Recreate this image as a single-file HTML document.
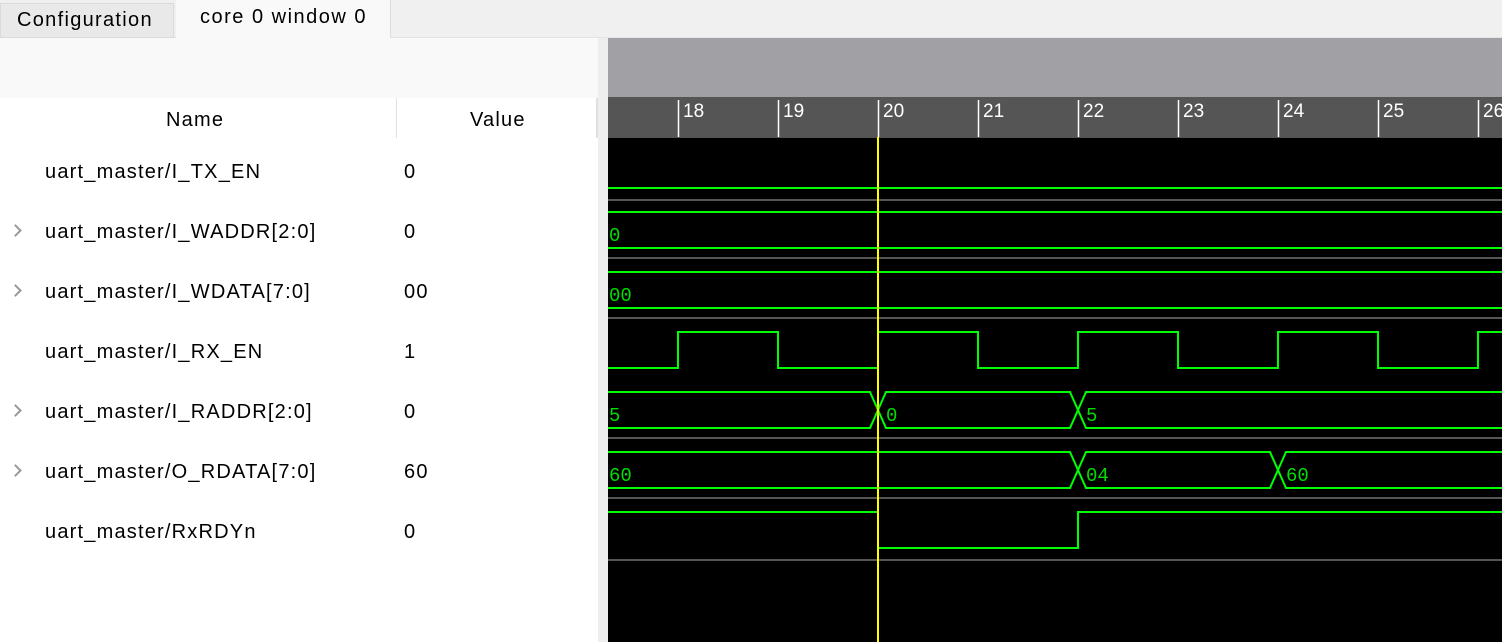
<!DOCTYPE html>
<html><head><style>
body{margin:0;width:1502px;height:642px;overflow:hidden;background:#fff;font-family:"Liberation Sans",sans-serif;position:relative}
.a{position:absolute}
.t{font-size:20px;color:#000;white-space:nowrap;letter-spacing:1.2px}
.c{position:absolute;left:11px;width:7px;height:7px;border-right:2px solid #999;border-top:2px solid #999;transform:rotate(45deg)}
</style></head><body>
<div class="a" style="left:0;top:0;width:1502px;height:37px;background:#f0f0f0;border-bottom:1px solid #e3e3e3"></div>
<div class="a" style="left:0;top:3px;width:172px;height:33px;background:#e9e9e9;border:1px solid #dadada"></div>
<div class="a t" style="left:17px;top:9px;letter-spacing:1.3px">Configuration</div>
<div class="a" style="left:176px;top:0;width:214px;height:38px;background:#f9f9f9;border-right:1px solid #ddd"></div>
<div class="a t" style="left:200px;top:6px;letter-spacing:1.5px">core 0 window 0</div>
<div class="a" style="left:0;top:38px;width:598px;height:60px;background:#f9f9f9"></div>
<div class="a" style="left:598px;top:38px;width:10px;height:604px;background:#eeeeee"></div>
<div class="a" style="left:396px;top:98px;width:1px;height:40px;background:#e0e0e0"></div>
<div class="a" style="left:596px;top:98px;width:2px;height:40px;background:#e0e0e0"></div>
<div class="a t" style="left:166px;top:109px">Name</div>
<div class="a t" style="left:470px;top:109px">Value</div>

<div class="a t" style="left:45px;top:161px">uart_master/I_TX_EN</div><div class="a t" style="left:404px;top:161px">0</div>
<div class="c" style="top:226px"></div>
<div class="a t" style="left:45px;top:221px">uart_master/I_WADDR[2:0]</div><div class="a t" style="left:404px;top:221px">0</div>
<div class="c" style="top:286px"></div>
<div class="a t" style="left:45px;top:281px">uart_master/I_WDATA[7:0]</div><div class="a t" style="left:404px;top:281px">00</div>
<div class="a t" style="left:45px;top:341px">uart_master/I_RX_EN</div><div class="a t" style="left:404px;top:341px">1</div>
<div class="c" style="top:406px"></div>
<div class="a t" style="left:45px;top:401px">uart_master/I_RADDR[2:0]</div><div class="a t" style="left:404px;top:401px">0</div>
<div class="c" style="top:466px"></div>
<div class="a t" style="left:45px;top:461px">uart_master/O_RDATA[7:0]</div><div class="a t" style="left:404px;top:461px">60</div>
<div class="a t" style="left:45px;top:521px">uart_master/RxRDYn</div><div class="a t" style="left:404px;top:521px">0</div>

<svg class="a" style="left:608px;top:38px" width="894" height="604" viewBox="608 38 894 604">
<rect x="608" y="38" width="894" height="59" fill="#a1a0a5"/>
<rect x="608" y="97" width="894" height="41" fill="#555"/>
<rect x="608" y="138" width="894" height="504" fill="#000"/>
<g stroke="#fff" stroke-width="1.5">
<line x1="678.5" y1="100" x2="678.5" y2="137"/><line x1="778.5" y1="100" x2="778.5" y2="137"/><line x1="878.5" y1="100" x2="878.5" y2="137"/><line x1="978.5" y1="100" x2="978.5" y2="137"/><line x1="1078.5" y1="100" x2="1078.5" y2="137"/><line x1="1178.5" y1="100" x2="1178.5" y2="137"/><line x1="1278.5" y1="100" x2="1278.5" y2="137"/><line x1="1378.5" y1="100" x2="1378.5" y2="137"/><line x1="1478.5" y1="100" x2="1478.5" y2="137"/>
</g>
<g fill="#fff" font-family="Liberation Sans Narrow,Liberation Sans,sans-serif" font-size="19">
<text x="683" y="117">18</text><text x="783" y="117">19</text><text x="883" y="117">20</text><text x="983" y="117">21</text><text x="1083" y="117">22</text><text x="1183" y="117">23</text><text x="1283" y="117">24</text><text x="1383" y="117">25</text><text x="1483" y="117">26</text>
</g>
<g stroke="#555" stroke-width="2">
<line x1="608" y1="200" x2="1502" y2="200"/><line x1="608" y1="258" x2="1502" y2="258"/><line x1="608" y1="318" x2="1502" y2="318"/><line x1="608" y1="438" x2="1502" y2="438"/><line x1="608" y1="498" x2="1502" y2="498"/><line x1="608" y1="560" x2="1502" y2="560"/>
</g>
<g stroke="#00ff00" stroke-width="2" fill="none">
<line x1="608" y1="188" x2="1502" y2="188"/>
<line x1="608" y1="212" x2="1502" y2="212"/><line x1="608" y1="248" x2="1502" y2="248"/>
<line x1="608" y1="272" x2="1502" y2="272"/><line x1="608" y1="308" x2="1502" y2="308"/>
<polyline points="608,368 678,368 678,332 778,332 778,368 878,368 878,332 978,332 978,368 1078,368 1078,332 1178,332 1178,368 1278,368 1278,332 1378,332 1378,368 1478,368 1478,332 1502,332"/>
<polyline points="608,392 870,392 886,428 1070,428 1086,392 1502,392"/>
<polyline points="608,428 870,428 886,392 1070,392 1086,428 1502,428"/>
<polyline points="608,452 1070,452 1086,488 1270,488 1286,452 1502,452"/>
<polyline points="608,488 1070,488 1086,452 1270,452 1286,488 1502,488"/>
<polyline points="608,512 878,512 878,548 1078,548 1078,512 1502,512"/>
</g>
<g fill="#00dd00" font-family="Liberation Mono,monospace" font-size="19">
<text x="609" y="241">0</text><text x="609" y="301">00</text>
<text x="609" y="421">5</text><text x="886" y="421">0</text><text x="1086" y="421">5</text>
<text x="609" y="481">60</text><text x="1086" y="481">04</text><text x="1286" y="481">60</text>
</g>
<line x1="878" y1="137" x2="878" y2="642" stroke="#ffff00" stroke-width="2"/>
</svg>
</body></html>
